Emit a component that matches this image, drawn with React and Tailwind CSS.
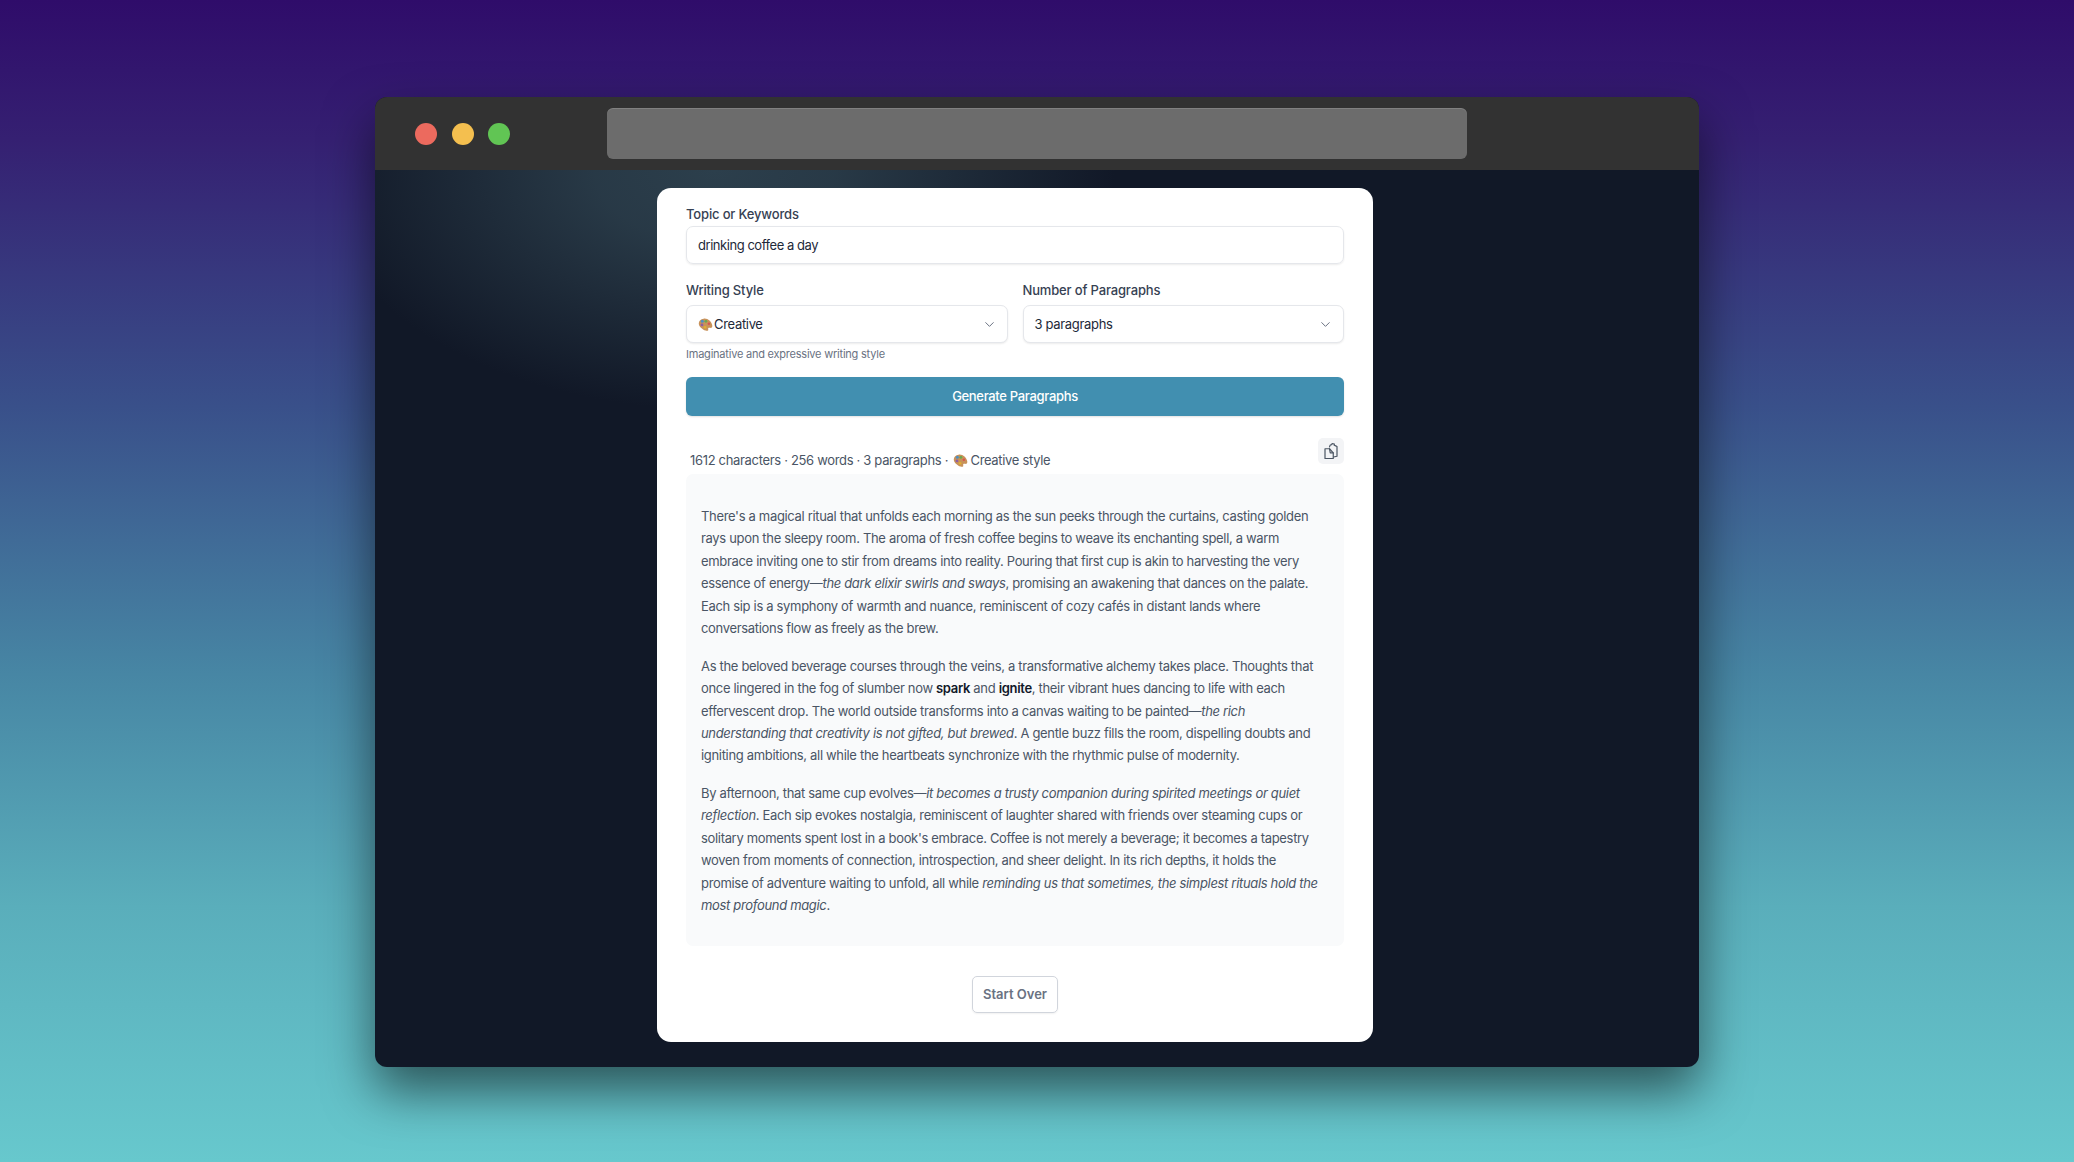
import { ChevronDown } from "lucide-react";

function Palette() {
  return (
    <svg viewBox="0 0 16 16" className="h-[15px] w-[15px] shrink-0">
      <path d="M6 1.800c4-.8 8.500 3 9.200 7 .4 2.400-1 3.200-2.400 2.700-1.400-.5-2.300.2-1.900 1.500.4 1.400-.8 2.200-2.700 1.500C4.500 13 .8 10 .8 6.800.8 4 3 2.400 6 1.800z" fill="#c8925a" />
      <circle cx="4.600" cy="4.600" r="1.600" fill="#4f8fc0" />
      <circle cx="8.400" cy="4.600" r="1.500" fill="#6aa84f" />
      <circle cx="11.600" cy="7.200" r="1.300" fill="#d9534f" />
      <circle cx="4.200" cy="8.400" r="1.500" fill="#8e5ea2" />
      <circle cx="7.600" cy="11" r="1.400" fill="#e0b030" />
    </svg>
  );
}

function CopyGlyph() {
  return (
    <svg viewBox="0 0 24 24" className="h-[18px] w-[18px]" fill="none" stroke="#4b5563" strokeWidth="1.600" strokeLinejoin="round" strokeLinecap="round">
      <path d="M10 6.500 11 4l2-.5.500-1.500 3 .8-.2 1.600 2 .8L20 6v13l-4.500 1" />
      <path d="M4 9h6l5 5.500V22H4z" />
      <path d="M10 9l1 5.500h4" />
    </svg>
  );
}

function Select({ children }) {
  return (
    <div className="flex h-[38px] items-center justify-between rounded-[7px] border border-gray-200 bg-white pl-[11px] pr-[10px] text-[13px] text-gray-800 shadow-[0_1px_2px_rgba(0,0,0,0.08)]">
      <div className="flex items-center gap-[1px]">{children}</div>
      <ChevronDown className="h-[15px] w-[15px] text-gray-500" strokeWidth={1.600} />
    </div>
  );
}

export default function App() {
  return (
    <div className="h-[1162px] w-[2074px] overflow-hidden bg-[linear-gradient(180deg,#2f0c6a_0%,#352072_12%,#39508a_35%,#4786a4_58%,#5aaebb_78%,#67c8cd_100%)] pl-[375px] pt-[97px] font-['Inter',sans-serif]">
      <div className="h-[970px] w-[1324px] overflow-hidden rounded-[12px] bg-[#111827] shadow-[0_24px_50px_rgba(0,0,0,0.55)]">
        <div className="flex h-[73px] items-center bg-[#323232] pl-[40px]">
          <div className="flex gap-[14.500px]">
            <div className="h-[22px] w-[22px] rounded-full bg-[#ec6a5e]" />
            <div className="h-[22px] w-[22px] rounded-full bg-[#f4bf4f]" />
            <div className="h-[22px] w-[22px] rounded-full bg-[#61c554]" />
          </div>
          <div className="ml-[97px] h-[51px] w-[860px] rounded-[6px] bg-[#6c6c6c] shadow-[inset_0_1px_0_rgba(255,255,255,0.15)]" />
        </div>
        <div className="h-[897px] bg-[radial-gradient(ellipse_400px_240px_at_340px_0px,rgba(44,63,76,1)_0%,rgba(44,63,76,0.85)_30%,rgba(44,63,76,0)_100%)] pl-[282px] pt-[18px]">
          <div className="h-[854px] w-[716px] rounded-[14px] bg-white px-[29px] text-[13px] leading-[22.400px] tracking-[-0.025em] text-gray-700">
            <div className="pt-[15px] text-[13px] font-medium leading-[22px] tracking-[-0.012em] text-gray-700">Topic or Keywords</div>
            <div className="mt-[1px] flex h-[38px] items-center rounded-[7px] border border-gray-200 pl-[11px] text-[13px] tracking-[-0.035em] text-gray-800 shadow-[0_1px_2px_rgba(0,0,0,0.08)]">
              drinking coffee a day
            </div>
            <div className="mt-[15px] grid grid-cols-2 gap-[15px]">
              <div>
                <div className="text-[13px] font-medium leading-[22px] tracking-[-0.012em] text-gray-700">Writing Style</div>
                <div className="mt-[4px]">
                  <Select>
                    <Palette />
                    <span>Creative</span>
                  </Select>
                </div>
                <div className="mt-[3px] text-[11px] leading-[16px] tracking-[-0.02em] text-gray-500">Imaginative and expressive writing style</div>
              </div>
              <div>
                <div className="text-[13px] font-medium leading-[22px] tracking-[-0.012em] text-gray-700">Number of Paragraphs</div>
                <div className="mt-[4px]">
                  <Select>
                    <span>3 paragraphs</span>
                  </Select>
                </div>
              </div>
            </div>
            <div className="mt-[15px] flex h-[39px] items-center justify-center rounded-[6px] bg-[#418fb0] text-[13px] font-medium text-white shadow-[0_1px_2px_rgba(0,0,0,0.12)]">
              Generate Paragraphs
            </div>
            <div className="mt-[22px] flex h-[36px] items-start justify-between pl-[4px]">
              <div className="mt-[11px] flex items-center gap-[2px] text-[13px] leading-[22px] text-gray-600">
                <span className="whitespace-pre">1612 characters · 256 words · 3 paragraphs · </span>
                <Palette />
                <span>Creative style</span>
              </div>
              <div className="flex h-[26px] w-[26px] items-center justify-center rounded-[5px] bg-gray-100">
                <CopyGlyph />
              </div>
            </div>
            <div className="h-[472px] rounded-[7px] bg-gray-50 pl-[15px] pr-[20px] pt-[31px] text-gray-600">
              <p>
                There's a magical ritual that unfolds each morning as the sun peeks through the curtains, casting golden rays upon the sleepy room. The aroma of fresh coffee begins to weave its enchanting spell, a warm embrace inviting one to stir from dreams into reality. Pouring that first cup is akin to harvesting the very essence of energy—<em>the dark elixir swirls and sways</em>, promising an awakening that dances on the palate. Each sip is a symphony of warmth and nuance, reminiscent of cozy cafés in distant lands where conversations flow as freely as the brew.
              </p>
              <p className="mt-[15.300px]">
                As the beloved beverage courses through the veins, a transformative alchemy takes place. Thoughts that once lingered in the fog of slumber now <strong className="font-semibold text-gray-900">spark</strong> and <strong className="font-semibold text-gray-900">ignite</strong>, their vibrant hues dancing to life with each effervescent drop. The world outside transforms into a canvas waiting to be painted—<em>the rich understanding that creativity is not gifted, but brewed</em>. A gentle buzz fills the room, dispelling doubts and igniting ambitions, all while the heartbeats synchronize with the rhythmic pulse of modernity.
              </p>
              <p className="mt-[15.300px]">
                By afternoon, that same cup evolves—<em>it becomes a trusty companion during spirited meetings or quiet reflection</em>. Each sip evokes nostalgia, reminiscent of laughter shared with friends over steaming cups or solitary moments spent lost in a book's embrace. Coffee is not merely a beverage; it becomes a tapestry woven from moments of connection, introspection, and sheer delight. In its rich depths, it holds the promise of adventure waiting to unfold, all while <em>reminding us that sometimes, the simplest rituals hold the most profound magic</em>.
              </p>
            </div>
            <div className="mt-[30px] flex justify-center">
              <div className="flex h-[37px] w-[86px] items-center justify-center rounded-[5px] border border-gray-300 text-[13px] font-semibold tracking-normal text-gray-500 shadow-[0_1px_2px_rgba(0,0,0,0.06)]">
                Start Over
              </div>
            </div>
          </div>
        </div>
      </div>
    </div>
  );
}
